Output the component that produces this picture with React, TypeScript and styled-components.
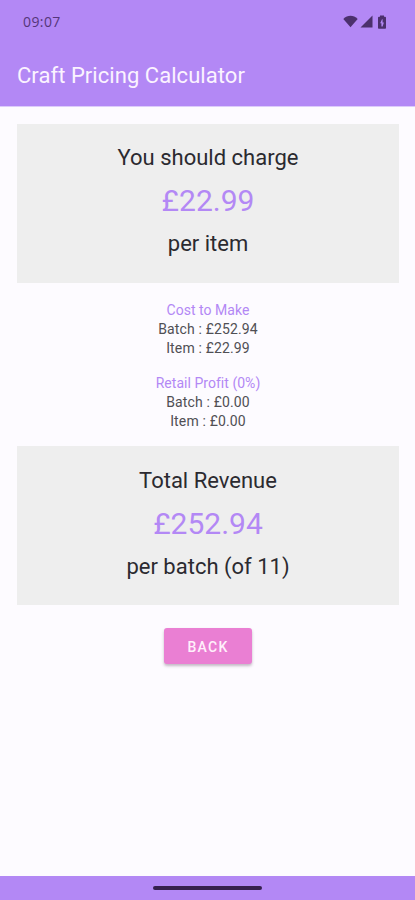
import React from 'react';
import styled, { createGlobalStyle } from 'styled-components';

const purple = '#b388f5';

const GlobalStyle = createGlobalStyle`
  * { box-sizing: border-box; }
  body { margin: 0; background: #fdfbff; font-family: Roboto, sans-serif; }
`;

const Screen = styled.div`
  height: 900px;
  display: flex;
  flex-direction: column;
  background: #fdfbff;
  overflow: hidden;
`;

const Header = styled.header`
  height: 106px;
  flex: none;
  background: ${purple};
  box-shadow: 0 1px 0 #dccbfb;
`;

const StatusBar = styled.div`
  height: 43px;
  display: flex;
  align-items: center;
  justify-content: space-between;
  padding: 0 26px 0 23px;
`;

const Clock = styled.span`
  font: 400 14px/20px "Open Sans", sans-serif;
  letter-spacing: 0.4px;
  color: #553679;
`;

const StatusIcons = styled.div`
  display: flex;
  align-items: center;
  gap: 2px;
  svg { display: block; fill: #4b306d; }
`;

const Title = styled.h1`
  margin: 0;
  padding: 18px 17px 0;
  font-size: 22px;
  font-weight: 400;
  line-height: 30px;
  letter-spacing: 0.05px;
  color: #fbf3ff;
`;

const Content = styled.main`
  flex: 1;
  display: flex;
  flex-direction: column;
  align-items: center;
  padding: 18px 16px 0 17px;
`;

const Card = styled.section<{ $inset: number }>`
  width: 100%;
  height: 159px;
  padding-top: ${(p) => p.$inset}px;
  background: #eeeeee;
  text-align: center;
`;

const CardText = styled.div`
  height: 43px;
  line-height: 43px;
  font-size: 22px;
  color: #2b2a30;
`;

const Amount = styled(CardText)`
  font-size: 30px;
  color: ${purple};
`;

const Breakdown = styled.section`
  height: 163px;
  display: flex;
  flex-direction: column;
  gap: 16px;
  padding-top: 18px;
`;

const Group = styled.div`
  text-align: center;
  font-size: 14px;
  line-height: 19px;
  letter-spacing: 0.15px;
  color: #504f54;
`;

const GroupTitle = styled.div`
  letter-spacing: 0.03px;
  color: ${purple};
`;

const BackButton = styled.button`
  width: 88px;
  height: 36px;
  margin-top: 23px;
  padding: 2px 0 0;
  border: 0;
  border-radius: 3px;
  background: #ea7fd3;
  box-shadow: 0 2px 3px rgba(60, 30, 60, 0.3);
  font: 500 14px/34px Roboto, sans-serif;
  letter-spacing: 1.3px;
  color: #fff0fb;
`;

const NavBar = styled.footer`
  height: 24px;
  flex: none;
  display: flex;
  justify-content: center;
  padding-top: 10px;
  background: ${purple};
`;

const HomeHandle = styled.div`
  width: 109px;
  height: 4px;
  border-radius: 2px;
  background: #36204e;
`;

const WifiIcon = () => (
  <svg width="15" height="13" viewBox="0 0 15 13">
    <path d="M7.5 12.3 0.3 4.1C4.5-.3 10.5-.3 14.7 4.1Z" />
  </svg>
);

const SignalIcon = () => (
  <svg width="13" height="13" viewBox="0 0 13 13">
    <path d="M12.5.5v12H.5Z" />
  </svg>
);

const BatteryIcon = () => (
  <svg width="14" height="14" viewBox="0 0 14 14">
    <path fillRule="evenodd" d="M5 1.7V.5h4v1.2h1q1 0 1 1V13q0 .8-.8.8H3.8Q3 13.8 3 13V2.7q0-1 1-1ZM7 4.3 5.2 8.2h1.2v3.2h1.2l1.3-3.8H7.6V4.3Z" />
  </svg>
);

const groups = [
  { title: 'Cost to Make', batch: '£252.94', item: '£22.99' },
  { title: 'Retail Profit (0%)', batch: '£0.00', item: '£0.00' },
];

export default function App() {
  return (
    <Screen>
      <GlobalStyle />
      <Header>
        <StatusBar>
          <Clock>09:07</Clock>
          <StatusIcons>
            <WifiIcon />
            <SignalIcon />
            <BatteryIcon />
          </StatusIcons>
        </StatusBar>
        <Title>Craft Pricing Calculator</Title>
      </Header>
      <Content>
        <Card $inset={12}>
          <CardText>You should charge</CardText>
          <Amount>£22.99</Amount>
          <CardText>per item</CardText>
        </Card>
        <Breakdown>
          {groups.map((g) => (
            <Group key={g.title}>
              <GroupTitle>{g.title}</GroupTitle>
              <div>Batch : {g.batch}</div>
              <div>Item : {g.item}</div>
            </Group>
          ))}
        </Breakdown>
        <Card $inset={13}>
          <CardText>Total Revenue</CardText>
          <Amount>£252.94</Amount>
          <CardText>per batch (of 11)</CardText>
        </Card>
        <BackButton>BACK</BackButton>
      </Content>
      <NavBar>
        <HomeHandle />
      </NavBar>
    </Screen>
  );
}
